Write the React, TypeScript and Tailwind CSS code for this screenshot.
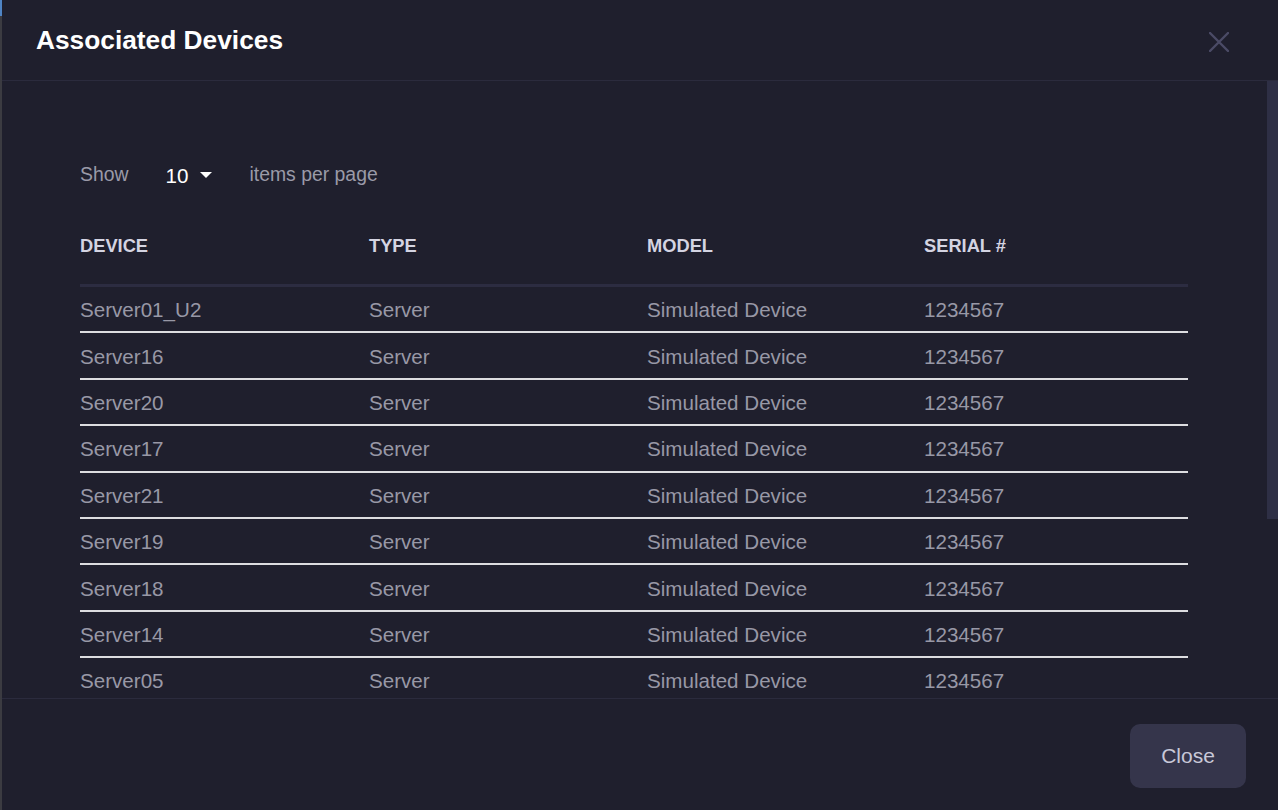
const devices = [
  'Server01_U2',
  'Server16',
  'Server20',
  'Server17',
  'Server21',
  'Server19',
  'Server18',
  'Server14',
  'Server05',
]

const columns = ['DEVICE', 'TYPE', 'MODEL', 'SERIAL #']
const colClass = 'grid grid-cols-[289px_278px_277px_1fr]'

export default function App() {
  return (
    <div className="flex h-[810px] w-full overflow-hidden bg-[#3b3b41] font-['Liberation_Sans',Arial,sans-serif]">
      <div className="flex w-[2px] flex-col">
        <div className="h-[16px] bg-[#4f84c4]" />
        <div className="flex-1 bg-[#3b3b41]" />
      </div>

      <div className="flex flex-1 flex-col bg-[#1f1f2d]">
        <header className="flex h-[81px] shrink-0 items-center justify-between border-b border-[#2b2b3d] pl-[34px] pr-[49px]">
          <h1 className="mt-[1px] text-[26.3px] font-bold leading-none text-white">Associated Devices</h1>
          <button type="button" className="mt-[4px] text-[#4b4b66]">
            <svg width="20" height="20" viewBox="0 0 20 20" fill="none" stroke="currentColor" strokeWidth="2.4" strokeLinecap="round">
              <path d="M1 1 L19 19 M19 1 L1 19" />
            </svg>
          </button>
        </header>

        <div className="flex min-h-0 flex-1">
          <section className="flex-1 overflow-hidden pl-[78px] pr-[79px] pt-[79px]">
            <div className="flex h-[30px] items-center text-[19.4px] text-[#9a9aa8]">
              <span>Show</span>
              <button type="button" className="ml-[37px] flex items-center text-[20.6px] text-white">
                <span className="mt-[3px]">10</span>
                <svg className="ml-[12px]" width="12" height="6" viewBox="0 0 12 6" fill="currentColor">
                  <path d="M0 0 L12 0 L6 6 Z" />
                </svg>
              </button>
              <span className="ml-[37px]">items per page</span>
            </div>

            <div className="mt-[43px]">
              <div className={`${colClass} border-b-[3px] border-[#2c2c41] pt-[1px] pb-[26px] text-[18.3px] font-bold leading-[24px] text-[#d4d4e2]`}>
                {columns.map((c) => (
                  <div key={c}>{c}</div>
                ))}
              </div>
              {devices.map((d) => (
                <div
                  key={d}
                  className={`${colClass} h-[46.4px] items-center border-b-2 border-[#dcdce0] pt-[2px] text-[20.6px] leading-[24px] text-[#9898a6]`}
                >
                  <div>{d}</div>
                  <div>Server</div>
                  <div>Simulated Device</div>
                  <div>1234567</div>
                </div>
              ))}
            </div>
          </section>

          <div className="w-[11px] shrink-0">
            <div className="h-[438px] bg-[#2e2f45]" />
          </div>
        </div>

        <footer className="flex h-[112px] shrink-0 items-start justify-end border-t border-[#2b2b3d] pr-[32px] pt-[25px]">
          <button
            type="button"
            className="h-[64px] w-[116px] rounded-[10px] bg-[#35354b] text-[21px] text-[#c8c8d8]"
          >
            Close
          </button>
        </footer>
      </div>
    </div>
  )
}
